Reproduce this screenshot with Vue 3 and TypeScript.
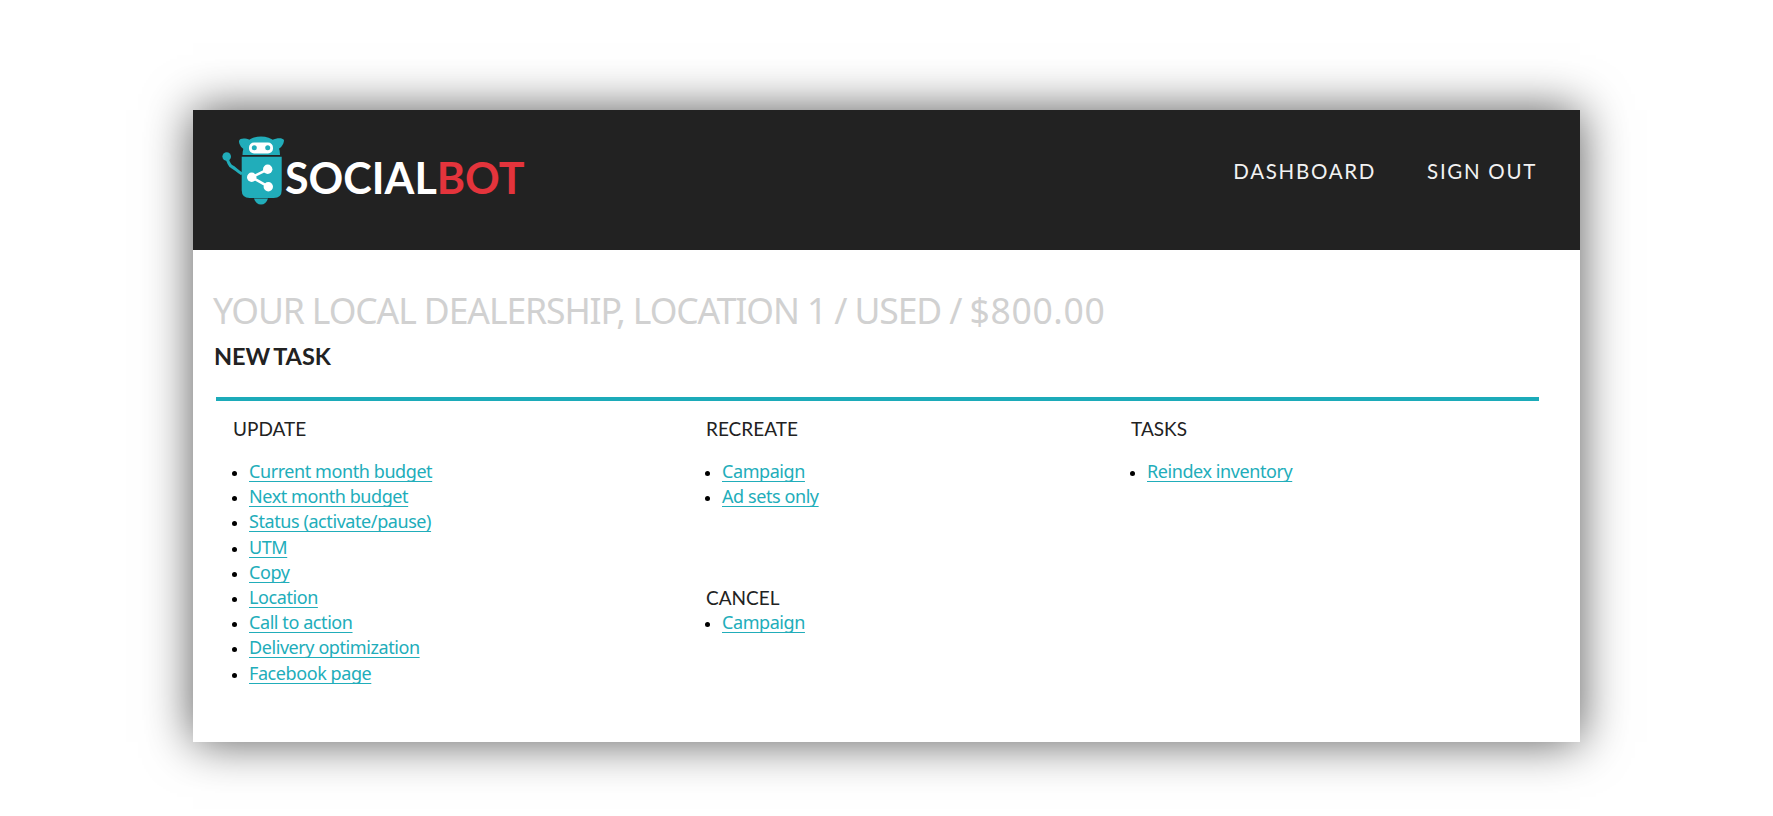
<script setup lang="ts">
const update: string[] = ['Current month budget','Next month budget','Status (activate/pause)','UTM','Copy','Location','Call to action','Delivery optimization','Facebook page']
</script>

<template>
  <div class="page">
    <div class="card">
      <header class="top">
        <div class="logo">
          <svg class="robot" viewBox="0 0 70 80" width="70" height="80">
            <path d="M11.7 27 C13 32 14 35 16.5 36.5 C20 38 22 41 27 44" fill="none" stroke="#21adba" stroke-width="3"/>
            <circle cx="11.7" cy="26.5" r="4.3" fill="#21adba"/>
            <path d="M24 11 C25 8 30 8 35 10 L31 20 C27 19 24 15 24 11 Z" fill="#21adba"/>
            <path d="M69 10 C67 7.500 62 8 57 10 L61 20 C65 19 69 15 69 10 Z" fill="#21adba"/>
            <path d="M27.500 25 C27.500 13 35 6.500 46 6.500 C57 6.500 65 13 65 25 Z" fill="#21adba"/>
            <rect x="34" y="12.500" width="24" height="11" rx="5" fill="#fff"/>
            <circle cx="39.300" cy="17.700" r="2.500" fill="#21adba"/>
            <circle cx="52.700" cy="17.700" r="2.500" fill="#21adba"/>
            <path d="M26.700 26.700 H66.700 V60 Q66.700 68 58.700 68 H34.700 Q26.700 68 26.700 60 Z" fill="#21adba"/>
            <path d="M39 68.500 H53 Q51 74.500 46 74.500 Q41 74.500 39 68.500 Z" fill="#21adba"/>
            <g fill="#fff">
              <path d="M36.700 47.300 L52.700 39.300 M36.700 47.300 L53.300 56.700" fill="none" stroke="#fff" stroke-width="2.600"/>
              <circle cx="36.700" cy="47.300" r="4.700"/>
              <circle cx="52.700" cy="39.300" r="4.700"/>
              <circle cx="53.300" cy="56.700" r="4.700"/>
            </g>
          </svg>
          <span class="word">SOCIAL<b>BOT</b></span>
        </div>
        <nav class="nav">
          <a>DASHBOARD</a>
          <a>SIGN OUT</a>
        </nav>
      </header>
      <main class="body">
        <h1 class="title">YOUR LOCAL DEALERSHIP, LOCATION 1 / USED / <span class="price">$800.00</span></h1>
        <h2 class="sub">NEW TASK</h2>
        <div class="cols">
          <section class="col c1">
            <h3>UPDATE</h3>
            <ul>
              <li v-for="u in update" :key="u"><a>{{ u }}</a></li>
            </ul>
          </section>
          <section class="col c2">
            <h3>RECREATE</h3>
            <ul>
              <li><a>Campaign</a></li>
              <li><a>Ad sets only</a></li>
            </ul>
            <h3 class="cancel">CANCEL</h3>
            <ul class="tight">
              <li><a>Campaign</a></li>
            </ul>
          </section>
          <section class="col c3">
            <h3>TASKS</h3>
            <ul>
              <li><a>Reindex inventory</a></li>
            </ul>
          </section>
        </div>
      </main>
    </div>
  </div>
</template>

<style>
html, body { margin: 0; background: #fff; }
</style>

<style scoped>
.page {
  min-height: 816px;
  box-sizing: border-box;
  padding-top: 110px;
  overflow: hidden;
}
.card {
  width: 1387px;
  height: 632px;
  margin: 0 auto;
  background: #fff;
  box-shadow: 0 0 45px rgba(0,0,0,.66);
  font-family: "Lato", sans-serif;
}
.top {
  height: 140px;
  background: #222;
  display: flex;
  justify-content: space-between;
  align-items: flex-start;
  box-sizing: border-box;
  padding: 20px 43px 0 22px;
}
.logo { display: flex; align-items: flex-start; }
.robot { display: block; }
.word {
  font: 700 43px/1 "Lato", sans-serif;
  color: #fff;
  margin: 26px 0 0 0;
}
.word b { color: #e4343c; font-weight: 700; }
.nav {
  display: flex;
  gap: 51px;
  padding-top: 29px;
}
.nav a {
  color: #f2f2f2;
  font: 400 20.5px/24px "Lato", sans-serif;
  letter-spacing: 1.7px;
}
.body { padding: 37px 20px 0 20px; }
.title {
  margin: 0;
  font: 400 35.5px/46px "Noto Sans", sans-serif;
  letter-spacing: -1.1px;
  color: #d1d1d1;
}
.price { letter-spacing: 0.65px; }
.sub {
  margin: 7px 0 0 1px;
  font: 700 23.5px/32px "Lato", sans-serif;
  word-spacing: -2px;
  color: #222;
}
.cols {
  margin: 25px 21px 0 3px;
  border-top: 4px solid #1cabb9;
  display: flex;
  padding-top: 16px;
}
.col h3 {
  margin: 0;
  font: 400 19px/24px "Lato", sans-serif;
  color: #222;
}
.c1 { width: 490px; padding-left: 17px; box-sizing: border-box; }
.c2 { width: 425px; box-sizing: border-box; }
ul {
  margin: 18px 0 0;
  padding: 0 0 0 16px;
  font: 400 18px/25.2px "Noto Sans", sans-serif;
}
ul.tight { margin-top: 0; }
.cancel { margin-top: 77px !important; }
li::marker { color: #000; font-size: 15px; }
li a {
  color: #21adba;
  letter-spacing: -0.42px;
  text-decoration: underline;
  text-decoration-thickness: 1px;
  text-underline-offset: 3px;
  text-decoration-skip-ink: none;
}
</style>
